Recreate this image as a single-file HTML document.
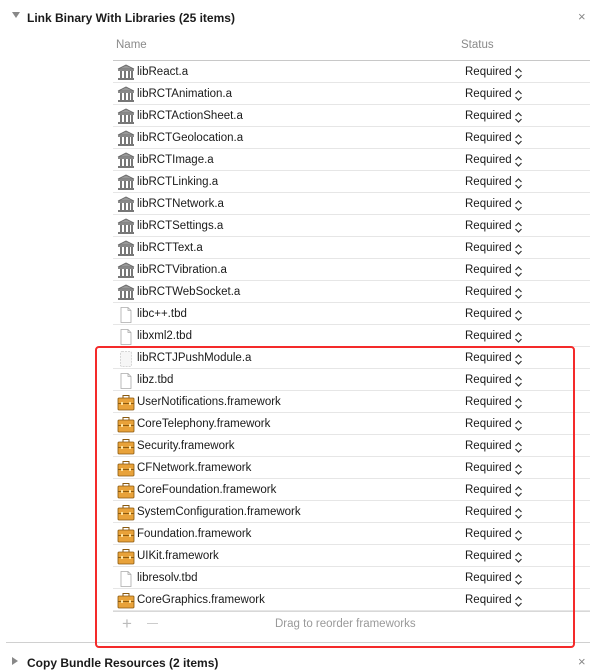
<!DOCTYPE html>
<html><head><style>
*{margin:0;padding:0;box-sizing:border-box}
body{width:606px;height:671px;background:#fff;font-family:"Liberation Sans",sans-serif;position:relative;overflow:hidden;color:#1a1a1a}
.a{position:absolute}
.row{position:absolute;left:113px;width:477px;height:22px;border-bottom:1px solid #e6e6e6;font-size:11.5px}
.row .n{position:absolute;left:24px;top:5px}
.row .s{position:absolute;left:352px;top:5px}
.row .ic{position:absolute;left:4px;top:3px}
.chev{position:absolute;left:401px;top:6px}
</style></head><body>
<div class="a" style="left:12px;top:12px;width:0;height:0;border-left:4px solid transparent;border-right:4px solid transparent;border-top:6px solid #888"></div>
<div class="a" style="left:27px;top:11px;font-size:12px;font-weight:bold">Link Binary With Libraries (25 items)</div>
<div class="a" style="left:578px;top:9px;font-size:13px;color:#888">×</div>
<div class="a" style="left:116px;top:39px;font-size:11.5px;color:#8a8a8a">Name</div>
<div class="a" style="left:461px;top:39px;font-size:11.5px;color:#8a8a8a">Status</div>
<div class="a" style="left:113px;top:60px;width:477px;height:1px;background:#c8c8c8"></div>
<div id="rows"></div>
<script>
var items=[["b","libReact.a"],["b","libRCTAnimation.a"],["b","libRCTActionSheet.a"],["b","libRCTGeolocation.a"],["b","libRCTImage.a"],["b","libRCTLinking.a"],["b","libRCTNetwork.a"],["b","libRCTSettings.a"],["b","libRCTText.a"],["b","libRCTVibration.a"],["b","libRCTWebSocket.a"],["f","libc++.tbd"],["f","libxml2.tbd"],["d","libRCTJPushModule.a"],["f","libz.tbd"],["t","UserNotifications.framework"],["t","CoreTelephony.framework"],["t","Security.framework"],["t","CFNetwork.framework"],["t","CoreFoundation.framework"],["t","SystemConfiguration.framework"],["t","Foundation.framework"],["t","UIKit.framework"],["f","libresolv.tbd"],["t","CoreGraphics.framework"]];
var ic={
b:'<svg width="18" height="17" viewBox="0 0 18 17"><path d="M1 5L9 1L17 5Z" fill="#999" stroke="#666" stroke-width="0.8"/><rect x="1" y="5" width="16" height="2" fill="#888"/><rect x="3" y="7" width="2" height="7" fill="#777"/><rect x="7" y="7" width="2" height="7" fill="#777"/><rect x="11" y="7" width="2" height="7" fill="#777"/><rect x="14" y="7" width="2" height="7" fill="#777"/><rect x="1" y="14" width="16" height="2" fill="#777"/></svg>',
f:'<svg width="18" height="18" viewBox="0 0 18 18"><path d="M4 1.5H11L14 4.5V16.5H4Z" fill="#fff" stroke="#aaa" stroke-width="0.8"/><path d="M11 1.5V4.5H14" fill="none" stroke="#aaa" stroke-width="0.8"/></svg>',
d:'<svg width="18" height="18" viewBox="0 0 18 18"><rect x="3.5" y="1.5" width="11" height="15" rx="1.5" fill="#f6f6f6" stroke="#ccc" stroke-width="0.8" stroke-dasharray="2 1"/></svg>',
t:'<svg width="18" height="17" viewBox="0 0 18 17"><rect x="6" y="1.5" width="6" height="3" fill="none" stroke="#8a5a10" stroke-width="1"/><rect x="1" y="4" width="16" height="12" rx="1" fill="#e8a23a" stroke="#8a5a10" stroke-width="0.8"/><rect x="1" y="9" width="16" height="1" fill="#8a5a10"/><rect x="4" y="8" width="2" height="3" fill="#fde2a0"/><rect x="12" y="8" width="2" height="3" fill="#fde2a0"/></svg>'};
var chev='<svg class="chev" width="9" height="13" viewBox="0 0 9 13"><path d="M1.5 5L4.5 2L7.5 5M1.5 8L4.5 11L7.5 8" fill="none" stroke="#333" stroke-width="1.2"/></svg>';
var h='';
items.forEach(function(it,i){h+='<div class="row" style="top:'+(61+i*22)+'px"><div class="ic">'+ic[it[0]]+'</div><div class="n">'+it[1]+'</div><div class="s">Required</div>'+chev+'</div>';});
document.getElementById('rows').outerHTML=h;
</script>
<div class="a" style="left:113px;top:611px;width:477px;height:1px;background:#d8d8d8"></div>
<div class="a" style="left:122px;top:614px;font-size:17px;color:#bbb;font-weight:300">+</div>
<div class="a" style="left:147px;top:623px;width:11px;height:1px;background:#ccc"></div>
<div class="a" style="left:275px;top:618px;font-size:11.5px;color:#999">Drag to reorder frameworks</div>
<div class="a" style="left:6px;top:642px;width:584px;height:1px;background:#d0d0d0"></div>
<div class="a" style="left:95px;top:346px;width:480px;height:302px;border:2.5px solid #f42a2a;border-radius:4px"></div>
<div class="a" style="left:12px;top:657px;width:0;height:0;border-top:4px solid transparent;border-bottom:4px solid transparent;border-left:6px solid #888"></div>
<div class="a" style="left:27px;top:656px;font-size:12px;font-weight:bold">Copy Bundle Resources (2 items)</div>
<div class="a" style="left:578px;top:654px;font-size:13px;color:#888">×</div>
</body></html>
